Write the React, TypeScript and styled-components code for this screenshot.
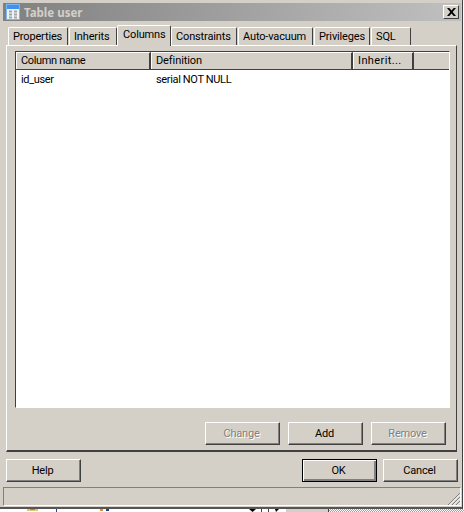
import styled, { createGlobalStyle } from "styled-components";

const GlobalStyle = createGlobalStyle`
    html, body {
        margin: 0;
        padding: 0;
        background: #fff;
    }
    body {
        width: 464px;
        height: 512px;
        overflow: hidden;
        font-family: Roboto, "Liberation Sans", sans-serif;
        font-size: 11px;
        color: #000;
    }
`;

const tabs = [
    { label: "Properties", width: 60 },
    { label: "Inherits", width: 48 },
    { label: "Columns", width: 54 },
    { label: "Constraints", width: 66 },
    { label: "Auto-vacuum", width: 75 },
    { label: "Privileges", width: 56 },
    { label: "SQL", width: 40 },
];

const columns = [
    { label: "Column name", width: 135, spacing: -0.35 },
    { label: "Definition", width: 202, spacing: -0.1 },
    { label: "Inherit...", width: 61, spacing: 0.4 },
];

function TableIcon() {
    return (
        <svg width="14" height="16" viewBox="0 0 14 16">
            <rect x="0.5" y="0.5" width="13" height="15" fill="#eaf2fb" stroke="#7db4f2" />
            <rect x="1" y="1" width="12" height="4" fill="#3f92f2" />
            <path d="M3 7.5h3M8 7.5h3M3 10.5h3M8 10.5h3M3 13.5h3M8 13.5h3" stroke="#a4a4a4" strokeWidth="2" />
        </svg>
    );
}

function CloseIcon() {
    return (
        <svg width="9" height="8" viewBox="0 0 9 8">
            <path d="M0 0h2.3l2.2 2.6L6.7 0H9L5.7 4 9 8H6.7L4.5 5.4 2.3 8H0l3.3-4z" fill="#000" />
        </svg>
    );
}

function Grip() {
    return (
        <svg width="12" height="12" viewBox="0 0 12 12">
            <path d="M12 0L0 12M12 4L4 12M12 8L8 12" stroke="#808080" strokeWidth="1" />
            <path d="M12 1.5L1.5 12M12 5.5L5.5 12M12 9.5L9.5 12" stroke="#fff" strokeWidth="1" />
        </svg>
    );
}

// the windows behind the dialog, only a few pixels of them show under its frame
function Backdrop() {
    return (
        <svg width="464" height="3" viewBox="0 0 464 3">
            <defs>
                <pattern id="dither" width="2" height="2" patternUnits="userSpaceOnUse">
                    <rect width="2" height="2" fill="#fff" />
                    <rect width="1" height="1" fill="#a0a0a0" />
                    <rect x="1" y="1" width="1" height="1" fill="#a0a0a0" />
                </pattern>
            </defs>
            <rect x="27" y="0" width="11" height="2" fill="#e0c878" />
            <rect x="30" y="0" width="5" height="1" fill="#5a9ad8" />
            <rect x="56" y="0" width="1" height="3" fill="#2040b0" />
            <rect x="100" y="0" width="3" height="2" fill="#d89040" />
            <rect x="106" y="0" width="3" height="2" fill="#204080" />
            <path d="M249 0h7l-3.5 3z" fill="#000" />
            <rect x="261" y="0" width="1" height="3" fill="#404040" />
            <rect x="268" y="0" width="1" height="3" fill="#404040" />
            <path d="M275 0h4l-3 3z" fill="#000" />
            <rect x="285" y="0" width="43" height="3" fill="#d4d0c8" />
            <rect x="285" y="0" width="1" height="3" fill="#fff" />
            <rect x="328" y="0" width="1" height="3" fill="#404040" />
            <rect x="329" y="0" width="135" height="3" fill="url(#dither)" />
        </svg>
    );
}

export default function App() {
    return (
        <Page>
            <GlobalStyle />
            <Dialog>
                <TitleBar>
                    <TitleLeft>
                        <TableIcon />
                        <TitleText>Table user</TitleText>
                    </TitleLeft>
                    <CloseButton><CloseIcon /></CloseButton>
                </TitleBar>
                <TabRow>
                    {tabs.map((t) => (
                        <Tab key={t.label} $width={t.width} $active={t.label === "Columns"}>{t.label}</Tab>
                    ))}
                </TabRow>
                <TabPanel>
                    <ListView>
                        <ListHeader>
                            {columns.map((c) => (
                                <HeaderCell key={c.label} $width={c.width} $spacing={c.spacing}>{c.label}</HeaderCell>
                            ))}
                            <HeaderFiller />
                        </ListHeader>
                        <ListRow>
                            <ListCell $width={135}>id_user</ListCell>
                            <ListCell $width={202}>serial NOT NULL</ListCell>
                        </ListRow>
                    </ListView>
                    <PanelActions>
                        <Button disabled>Change</Button>
                        <Button>Add</Button>
                        <Button disabled>Remove</Button>
                    </PanelActions>
                </TabPanel>
                <DialogActions>
                    <Button>Help</Button>
                    <RightActions>
                        <DefaultButton>OK</DefaultButton>
                        <Button>Cancel</Button>
                    </RightActions>
                </DialogActions>
                <StatusBar><Grip /></StatusBar>
            </Dialog>
            <Behind><Backdrop /></Behind>
        </Page>
    );
}

const Page = styled.div`
    width: 464px;
    height: 512px;
    overflow: hidden;
    display: flex;
    flex-direction: column;
`;

const Dialog = styled.div`
    width: 463px;
    height: 509px;
    flex: none;
    box-sizing: border-box;
    display: flex;
    flex-direction: column;
    background: #d4d0c8;
    padding: 3px 0 1px 3px;
    border-right: 1px solid #404040;
    border-bottom: 2px solid #555;
`;

const TitleBar = styled.div`
    width: 458px;
    height: 18px;
    flex: none;
    box-sizing: border-box;
    display: flex;
    align-items: center;
    justify-content: space-between;
    padding: 0 2px 0 3px;
    background: linear-gradient(to right, #808080, #c0c0c0);
`;

const TitleLeft = styled.div`
    display: flex;
    align-items: center;
    gap: 4px;
`;

const TitleText = styled.span`
    font-family: "Noto Sans", sans-serif;
    font-weight: 700;
    font-size: 11.5px;
    color: #d4d0c8;
`;

const CloseButton = styled.div`
    width: 16px;
    height: 14px;
    box-sizing: border-box;
    display: flex;
    align-items: center;
    justify-content: center;
    background: #d4d0c8;
    border: 1px solid;
    border-color: #fff #404040 #404040 #fff;
`;

const TabRow = styled.div`
    display: flex;
    align-items: flex-end;
    height: 18px;
    flex: none;
    margin-top: 6px;
    padding-left: 5px;
    position: relative;
    z-index: 1;
`;

const Tab = styled.div<{ $width: number; $active?: boolean }>`
    width: ${(p) => p.$width}px;
    height: ${(p) => (p.$active ? 21 : 18)}px;
    box-sizing: border-box;
    flex: none;
    padding: ${(p) => (p.$active ? "2px 0 0 5px" : "2px 0 0 4px")};
    margin: ${(p) => (p.$active ? "0 0 -1px -1px" : "0 1px 0 0")};
    background: #d4d0c8;
    border-top: 1px solid #fff;
    border-left: 1px solid #fff;
    border-right: 1px solid #404040;
    border-radius: 2px 2px 0 0;
    line-height: 14px;
    letter-spacing: -0.15px;
    white-space: nowrap;
`;

const TabPanel = styled.div`
    width: 451px;
    height: 407px;
    flex: none;
    margin-left: 3px;
    box-sizing: border-box;
    display: flex;
    flex-direction: column;
    padding: 5px 6px 0 8px;
    border: 1px solid;
    border-color: #fff #404040 #404040 #fff;
    border-bottom-width: 2px;
`;

const ListView = styled.div`
    height: 357px;
    flex: none;
    box-sizing: border-box;
    display: flex;
    flex-direction: column;
    background: #fff;
    border: 1px solid;
    border-color: #404040 #fff #fff #404040;
`;

const ListHeader = styled.div`
    display: flex;
    height: 18px;
    flex: none;
    box-sizing: border-box;
    border-bottom: 1px solid #404040;
    background: #d4d0c8;
`;

const HeaderCell = styled.div<{ $width: number; $spacing: number }>`
    width: ${(p) => p.$width}px;
    flex: none;
    box-sizing: border-box;
    padding-left: 4px;
    line-height: 16px;
    letter-spacing: ${(p) => p.$spacing}px;
    border-top: 1px solid #fff;
    border-left: 1px solid #fff;
    border-right: 2px solid #404040;
    white-space: nowrap;
`;

const HeaderFiller = styled.div`
    flex: 1;
    border-top: 1px solid #fff;
`;

const ListRow = styled.div`
    display: flex;
    height: 18px;
    flex: none;
    align-items: center;
`;

const ListCell = styled.div<{ $width: number }>`
    width: ${(p) => p.$width}px;
    flex: none;
    padding-left: 5px;
    box-sizing: border-box;
    letter-spacing: -0.35px;
`;

const PanelActions = styled.div`
    display: flex;
    justify-content: flex-end;
    gap: 8px;
    margin-top: 14px;
    padding-right: 4px;
`;

const Button = styled.button`
    width: 75px;
    height: 23px;
    box-sizing: border-box;
    padding: 0 2px 0 0;
    background: #d4d0c8;
    font: inherit;
    letter-spacing: -0.2px;
    color: #000;
    border: 1px solid;
    border-color: #fff #404040 #404040 #fff;
    box-shadow: inset -1px -1px 0 #808080;
    &:disabled {
        color: #808080;
        text-shadow: 1px 1px 0 #fff;
    }
`;

const DefaultButton = styled(Button)`
    border: 1px solid #000;
    box-shadow: inset 1px 1px 0 #fff, inset -2px -2px 0 #808080;
`;

const DialogActions = styled.div`
    width: 452px;
    flex: none;
    display: flex;
    justify-content: space-between;
    margin: 7px 0 0 3px;
`;

const RightActions = styled.div`
    display: flex;
    gap: 6px;
`;

const StatusBar = styled.div`
    width: 458px;
    height: 19px;
    flex: none;
    margin-top: 5px;
    box-sizing: border-box;
    display: flex;
    justify-content: flex-end;
    align-items: flex-end;
    border: 1px solid;
    border-color: #808080 #fff #fff #808080;
`;

const Behind = styled.div`
    height: 3px;
    flex: none;
    line-height: 0;
    background: #fff;
`;
